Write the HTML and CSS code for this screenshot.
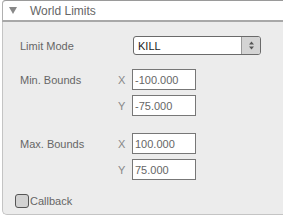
FILE: index.html
```html
<!DOCTYPE html>
<html lang="en">
<head>
<meta charset="UTF-8">
<title>World Limits</title>
<link rel="stylesheet" href="styles.css">
</head>
<body>

<div class="panel">
  <!-- Header -->
  <div class="panel-header">
    <span class="arrow"></span>
    <span class="title">World Limits</span>
  </div>

  <div class="panel-body">
    <!-- Limit Mode -->
    <div class="row mode-row">
      <div class="label">Limit Mode</div>
      <div class="axis"></div>
      <div class="select">
        <span class="select-text">KILL</span>
        <span class="spinner">
          <svg width="7" height="9" viewBox="0 0 7 9"><path d="M3.5 0.5 L6 3.5 H1 Z M3.5 8.5 L6 5.5 H1 Z" fill="#555"/></svg>
        </span>
      </div>
    </div>

    <!-- Min Bounds -->
    <div class="group min-group">
      <div class="row">
        <div class="label">Min. Bounds</div>
        <div class="axis">X</div>
        <input class="num" type="text" value="-100.000">
      </div>
      <div class="row">
        <div class="label"></div>
        <div class="axis">Y</div>
        <input class="num" type="text" value="-75.000">
      </div>
    </div>

    <!-- Max Bounds -->
    <div class="group max-group">
      <div class="row">
        <div class="label">Max. Bounds</div>
        <div class="axis">X</div>
        <input class="num" type="text" value="100.000">
      </div>
      <div class="row">
        <div class="label"></div>
        <div class="axis">Y</div>
        <input class="num" type="text" value="75.000">
      </div>
    </div>

    <!-- Callback -->
    <label class="check-row">
      <span class="check"></span>
      <span>Callback</span>
    </label>
  </div>
</div>

</body>
</html>
```

FILE: styles.css
```css
body { margin: 0; background: #fff; font-family: "Liberation Sans", Arial, sans-serif; font-size: 11px; color: #666; }
.panel { margin-left: 2px; height: 215px; background: #ececec; border: 1px solid #c4c4c4; border-right: none; border-radius: 4px 0 0 5px; box-sizing: border-box; }
.panel-header { background: #fff; border-top: 1px solid #9a9a9a; border-bottom: 2px solid #a8a8a8; margin-top: -1px; margin-left: -1px; border-left: 1px solid #b0b0b0; border-radius: 4px 0 0 0; display: flex; align-items: center; box-sizing: border-box; height: 22px; }
.arrow { width: 0; height: 0; border-left: 4px solid transparent; border-right: 4px solid transparent; border-top: 7px solid #888; margin-left: 6px; margin-right: 13px; }
.title { font-size: 12px; color: #666; }
.panel-body { padding: 14px 0 0 17px; }
.row { display: flex; align-items: center; height: 21px; }
.row + .row { margin-top: 5px; }
.label { width: 98px; }
.axis { width: 14px; color: #888; }
.mode-row { height: 19px; }
.select { width: 128px; height: 19px; margin-left: 1px; box-sizing: border-box; border: 1px solid #6a6a6a; border-radius: 3px; background: #fff; display: flex; align-items: center; }
.select-text { flex: 1; padding-left: 4px; color: #222; }
.spinner { width: 18px; height: 100%; background: #d4d4d4; border-left: 1px solid #999; border-radius: 0 2px 2px 0; display: flex; align-items: center; justify-content: center; }
.num { width: 64px; height: 21px; box-sizing: border-box; margin: 0; padding: 0 2px; border: 1px solid #777; background: #fff; font: inherit; color: #666; }
.min-group { margin-top: 14px; }
.max-group { margin-top: 17px; }
.check-row { display: flex; align-items: center; margin-top: 14px; margin-left: -5px; }
.check { width: 14px; height: 14px; box-sizing: border-box; border: 1px solid #555; border-radius: 3px; background: #d2d2d2; margin-right: 1px; }
```
